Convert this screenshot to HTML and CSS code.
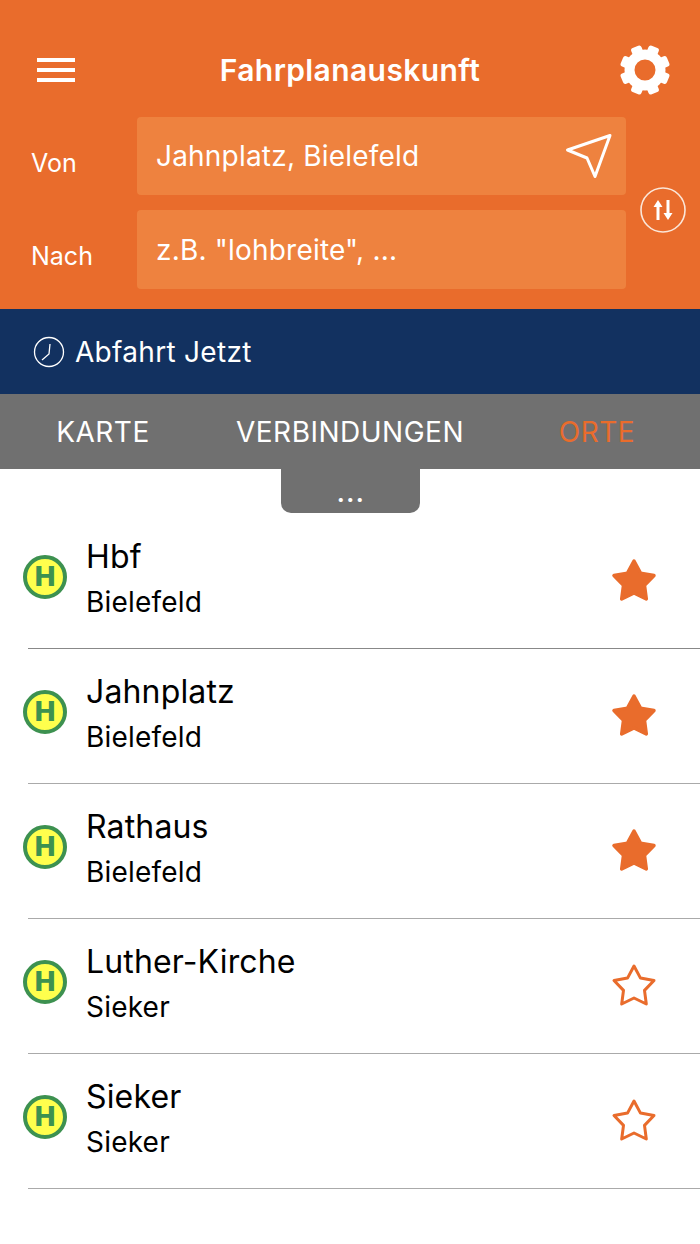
FILE: index.html
```html
<!DOCTYPE html>
<html lang="de">
<head>
<meta charset="UTF-8">
<meta name="viewport" content="width=device-width, initial-scale=1.0">
<title>Fahrplanauskunft</title>
<link rel="stylesheet" href="styles.css">
</head>
<body>

<header class="header">
    <div class="topbar">
        <div class="burger"><span></span><span></span><span></span></div>
        <h1 class="title">Fahrplanauskunft</h1>
        <svg class="gear" width="56" height="56" viewBox="0 0 56 56">
            <g fill="#fff">
                <rect x="22.5" y="3" width="11" height="12" rx="2.5" transform="rotate(22.5 28 28)"/>
                <rect x="22.5" y="3" width="11" height="12" rx="2.5" transform="rotate(67.5 28 28)"/>
                <rect x="22.5" y="3" width="11" height="12" rx="2.5" transform="rotate(112.5 28 28)"/>
                <rect x="22.5" y="3" width="11" height="12" rx="2.5" transform="rotate(157.5 28 28)"/>
                <rect x="22.5" y="3" width="11" height="12" rx="2.5" transform="rotate(202.5 28 28)"/>
                <rect x="22.5" y="3" width="11" height="12" rx="2.5" transform="rotate(247.5 28 28)"/>
                <rect x="22.5" y="3" width="11" height="12" rx="2.5" transform="rotate(292.5 28 28)"/>
                <rect x="22.5" y="3" width="11" height="12" rx="2.5" transform="rotate(337.5 28 28)"/>
            </g>
            <circle cx="28" cy="28" r="15.5" fill="none" stroke="#fff" stroke-width="10"/>
        </svg>
    </div>
    <div class="search">
        <label class="search-label">Von</label>
        <div class="field">
            <span>Jahnplatz, Bielefeld</span>
            <svg width="50" height="48" viewBox="0 0 50 48">
                <path d="M46 3.5 3.5 18l19.5 8 8 18.5z" fill="none" stroke="#fff" stroke-width="3" stroke-linejoin="round"/>
            </svg>
        </div>
        <button class="swap">
            <svg width="46" height="46" viewBox="0 0 46 46">
                <circle cx="23" cy="23" r="22" fill="none" stroke="#fbe6d8" stroke-width="1.6"/>
                <path d="M18 33V17M28 13v16" stroke="#fff" stroke-width="3"/>
                <path d="M18 13l-4.5 7h9zM28 33l-4.5-7h9z" fill="#fff"/>
            </svg>
        </button>
        <label class="search-label">Nach</label>
        <div class="field">
            <span>z.B. "lohbreite", ...</span>
        </div>
    </div>
</header>

<div class="time">
    <svg width="32" height="32" viewBox="0 0 32 32">
        <circle cx="16" cy="16" r="14.5" fill="none" stroke="#fff" stroke-width="1.3"/>
        <path d="M17 8 16 18 9 24" fill="none" stroke="#fff" stroke-width="1.3"/>
    </svg>
    <span>Abfahrt Jetzt</span>
</div>

<nav class="tabs">
    <a>KARTE</a>
    <a>VERBINDUNGEN</a>
    <a class="active">ORTE</a>
</nav>
<div class="handle">...</div>

<ul class="places">
    <li class="place">
        <span class="stop">H</span>
        <div class="place-text"><div class="place-name">Hbf</div><div class="place-city">Bielefeld</div></div>
        <svg class="star" width="48" height="48" viewBox="0 0 48 48"><path d="M24 4l6.5 12.1L44 18.5 34.5 28.4 36.3 42 24 36 11.7 42l1.8-13.6L4 18.5l13.5-2.4z" fill="#e96c2c" stroke="#e96c2c" stroke-width="3.5" stroke-linejoin="round"/></svg>
    </li>
    <li class="place">
        <span class="stop">H</span>
        <div class="place-text"><div class="place-name">Jahnplatz</div><div class="place-city">Bielefeld</div></div>
        <svg class="star" width="48" height="48" viewBox="0 0 48 48"><path d="M24 4l6.5 12.1L44 18.5 34.5 28.4 36.3 42 24 36 11.7 42l1.8-13.6L4 18.5l13.5-2.4z" fill="#e96c2c" stroke="#e96c2c" stroke-width="3.5" stroke-linejoin="round"/></svg>
    </li>
    <li class="place">
        <span class="stop">H</span>
        <div class="place-text"><div class="place-name">Rathaus</div><div class="place-city">Bielefeld</div></div>
        <svg class="star" width="48" height="48" viewBox="0 0 48 48"><path d="M24 4l6.5 12.1L44 18.5 34.5 28.4 36.3 42 24 36 11.7 42l1.8-13.6L4 18.5l13.5-2.4z" fill="#e96c2c" stroke="#e96c2c" stroke-width="3.5" stroke-linejoin="round"/></svg>
    </li>
    <li class="place">
        <span class="stop">H</span>
        <div class="place-text"><div class="place-name">Luther-Kirche</div><div class="place-city">Sieker</div></div>
        <svg class="star" width="48" height="48" viewBox="0 0 48 48"><path d="M24 4l6.5 12.1L44 18.5 34.5 28.4 36.3 42 24 36 11.7 42l1.8-13.6L4 18.5l13.5-2.4z" fill="none" stroke="#e96c2c" stroke-width="3" stroke-linejoin="round"/></svg>
    </li>
    <li class="place">
        <span class="stop">H</span>
        <div class="place-text"><div class="place-name">Sieker</div><div class="place-city">Sieker</div></div>
        <svg class="star" width="48" height="48" viewBox="0 0 48 48"><path d="M24 4l6.5 12.1L44 18.5 34.5 28.4 36.3 42 24 36 11.7 42l1.8-13.6L4 18.5l13.5-2.4z" fill="none" stroke="#e96c2c" stroke-width="3" stroke-linejoin="round"/></svg>
    </li>
</ul>

</body>
</html>
```

FILE: styles.css
```css
body {
    margin: 0;
    height: 1244px;
    overflow: hidden;
    background-color: #fff;
    font-family: Inter, "Noto Sans", sans-serif;
    color: #000;
}
.header {
    height: 309px;
    box-sizing: border-box;
    padding-top: 40px;
    background-color: #e96c2c;
    color: #fff;
}
.topbar {
    display: grid;
    grid-template-columns: 1fr auto 1fr;
    align-items: center;
    height: 60px;
    padding: 0 27px;
}
.burger {
    display: flex;
    flex-direction: column;
    gap: 6px;
    width: 38px;
    margin-left: 10px;
}
.burger span {
    height: 4px;
    background-color: #fff;
}
.title {
    margin: 0;
    font-size: 30px;
    font-weight: 600;
    letter-spacing: 0.4px;
}
.gear {
    display: block;
    justify-self: end;
}
.search {
    display: grid;
    grid-template-columns: 137px 489px 74px;
    grid-template-rows: 78px 79px;
    row-gap: 15px;
    margin-top: 17px;
}
.search-label {
    padding: 31px 0 0 31px;
    font-size: 25px;
}
.field {
    display: flex;
    align-items: center;
    justify-content: space-between;
    padding: 0 12px 0 19px;
    background-color: #ee823f;
    border-radius: 4px;
    font-size: 28px;
    letter-spacing: 0.2px;
}
.swap {
    grid-row: 1 / 3;
    grid-column: 3;
    align-self: center;
    justify-self: center;
    width: 46px;
    height: 46px;
    margin-top: 14px;
    padding: 0;
    background: none;
    border: none;
}
.swap svg {
    display: block;
}
.time {
    display: flex;
    align-items: center;
    gap: 10px;
    height: 85px;
    padding-left: 33px;
    background-color: #123160;
    color: #fff;
    font-size: 28px;
    letter-spacing: 0.3px;
}
.tabs {
    display: grid;
    grid-template-columns: repeat(3, minmax(0, 1fr));
    column-gap: 41px;
    align-items: center;
    height: 75px;
    background-color: #707070;
    color: #fff;
    font-size: 28px;
    letter-spacing: 0.5px;
    text-align: center;
    white-space: nowrap;
}
.tabs a {
    display: flex;
    justify-content: center;
}
.tabs .active {
    color: #e96c2c;
}
.handle {
    width: 139px;
    height: 44px;
    box-sizing: border-box;
    margin: 0 auto;
    padding-left: 2px;
    background-color: #707070;
    border-radius: 0 0 10px 10px;
    color: #fff;
    font-size: 24px;
    font-weight: 700;
    letter-spacing: 1.5px;
    line-height: 50px;
    text-align: center;
}
.places {
    margin: 0;
    padding: 1px 0 0;
    list-style: none;
}
.place {
    display: flex;
    align-items: center;
    height: 135px;
    box-sizing: border-box;
    margin-left: 28px;
    padding-right: 42px;
    border-bottom: 1px solid #aaa;
}
.place:first-child {
    border-bottom-color: #888;
}
.stop {
    display: block;
    width: 44px;
    height: 44px;
    box-sizing: border-box;
    margin: -9px 0 0 -5px;
    background-color: #ffff4d;
    border: 4px solid #3d9150;
    border-radius: 50%;
    color: #3d9150;
    font-family: "DejaVu Sans", sans-serif;
    font-size: 27px;
    font-weight: 700;
    line-height: 36px;
    text-align: center;
}
.place-text {
    flex: 1;
    margin-left: 19px;
    margin-top: -4px;
}
.place-name {
    font-size: 32px;
    letter-spacing: 0.15px;
    line-height: 40px;
}
.place-city {
    margin-top: 5px;
    font-size: 28px;
    letter-spacing: 0.2px;
    line-height: 40px;
}
.star {
    display: block;
}
```
